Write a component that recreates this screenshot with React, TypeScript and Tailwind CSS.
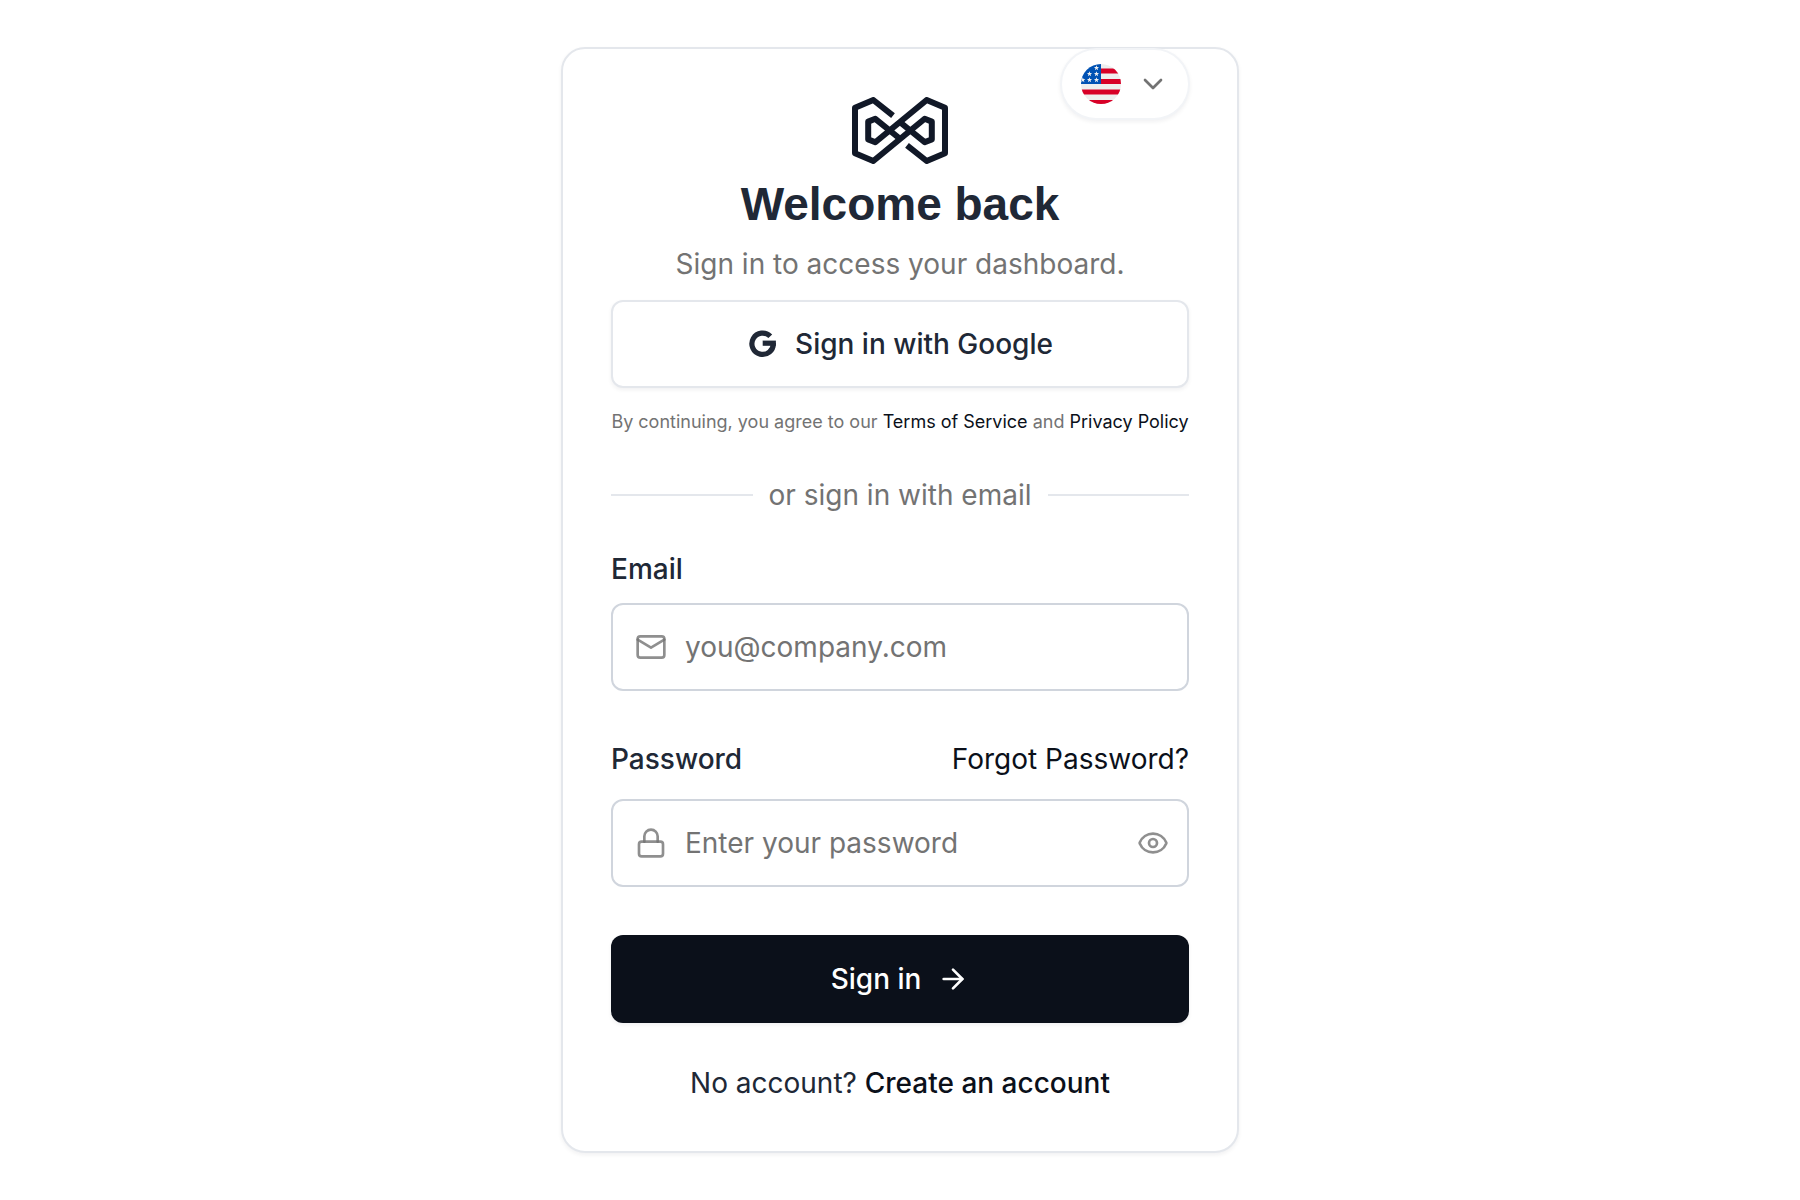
import { useState } from 'react';
import { ArrowRight, ChevronDown, Eye, Lock } from 'lucide-react';

const inputClass =
  'h-[88px] w-full rounded-xl border-2 border-[#d0d5dd] bg-white pl-[72px] text-[28px] leading-10 text-[#1f2937] outline-none placeholder:text-[#737373]';

function Logo() {
  return (
    <svg width="96" height="67" viewBox="0 0 96 67" fill="none" stroke="#111827" strokeWidth="6" strokeLinejoin="round" aria-hidden="true">
      <path d="M41 18.6 21.3 3 3 10.7V56.3L21.3 64 72.7 21.8 79.8 24.6V42.4L72.7 45.2 49 26" />
      <path d="M55 48.4 74.7 64 93 56.3V10.7L74.7 3 23.3 45.2 16.2 42.4V24.6L23.3 21.8 47 41" />
    </svg>
  );
}

function GoogleIcon() {
  return (
    <svg width="32" height="32" viewBox="0 0 32 32" fill="none" stroke="currentColor" strokeWidth="5.2" aria-hidden="true">
      <path d="M23.3 8.3A10.7 10.7 0 1 0 26.3 15.2" />
      <path d="M15.7 15.2H28.9" />
    </svg>
  );
}

// Envelope with a sharp fold
function MailIcon({ className }: { className?: string }) {
  return (
    <svg width="32" height="32" viewBox="0 0 24 24" fill="none" stroke="currentColor" strokeWidth="2" strokeLinecap="round" strokeLinejoin="round" className={className} aria-hidden="true">
      <rect x="2" y="4" width="20" height="16" rx="2" />
      <path d="m2 6.5 10 6 10-6" />
    </svg>
  );
}

const STAR = 'M0-2.8.7-.9 2.6-.9 1.1.3 1.6 2.2 0 1.1-1.6 2.2-1.1.3-2.6-.9-.7-.9Z';
const STARS = [
  [15.5, 4], [8.5, 10], [15.5, 10], [1.8, 16], [8.5, 16], [15.5, 16],
];

function UsFlag() {
  return (
    <svg width="40" height="40" viewBox="0 0 40 40" aria-hidden="true">
      <clipPath id="flag-circle">
        <circle cx="20" cy="20" r="20" />
      </clipPath>
      <g clipPath="url(#flag-circle)">
        <path fill="#eee" d="M0 0h40v40H0z" />
        <path fill="#d80027" d="M20 4.4h20v5H20zM20 15h20v5H20zM0 25.4h40v5H0zM0 36h40v4H0z" />
        <path fill="#0052b4" d="M0 0h20v20H0z" />
        {STARS.map(([x, y]) => (
          <path key={`${x}-${y}`} d={STAR} fill="#eee" transform={`translate(${x} ${y})`} />
        ))}
      </g>
    </svg>
  );
}

export default function App() {
  const [showPassword, setShowPassword] = useState(false);

  return (
    <main className="flex min-h-screen items-center justify-center bg-white font-[Inter,sans-serif] text-[28px] leading-10 text-[#202836] [font-optical-sizing:none]">
      <div className="relative w-full max-w-[678px] rounded-3xl border-2 border-[#e4e7ec] bg-white p-12 shadow-[0_2px_4px_rgba(16,24,40,0.06)]">
        {/* Language picker */}
        <button
          type="button"
          aria-label="Change language"
          aria-haspopup="listbox"
          className="absolute -top-px right-[47px] flex items-center gap-4 rounded-full border-2 border-[#f2f4f7] bg-white px-[19px] py-[14px] shadow-[0_2px_4px_rgba(16,24,40,0.06)]"
        >
          <UsFlag />
          <ChevronDown size={32} className="text-[#737373]" />
        </button>

        {/* Header */}
        <div className="flex flex-col items-center gap-2 text-center">
          <Logo />
          <h1 className="font-['Liberation_Sans',sans-serif] text-[46px] leading-[64px] font-bold">Welcome back</h1>
          <p className="text-[#737373]">Sign in to access your dashboard.</p>
        </div>

        <button
          type="button"
          className="mt-4 flex h-[88px] w-full items-center justify-center gap-4 rounded-xl border-2 border-[#e4e7ec] bg-white font-medium shadow-[0_2px_4px_rgba(16,24,40,0.06)]"
        >
          <GoogleIcon />
          Sign in with Google
        </button>

        <p className="mt-5 text-center text-[18px] leading-[27px] whitespace-nowrap text-[#737373]">
          By continuing, you agree to our <a href="#terms" className="text-[#0b101a]">Terms of Service</a> and{' '}
          <a href="#privacy" className="text-[#0b101a]">Privacy Policy</a>
        </p>

        <div className="mt-10 flex items-center gap-4 text-[#737373]">
          <span className="h-0.5 flex-1 bg-[#e4e7ec]" />
          or sign in with email
          <span className="h-0.5 flex-1 bg-[#e4e7ec]" />
        </div>

        {/* Email form */}
        <form className="mt-10" onSubmit={(e) => e.preventDefault()}>
          <label htmlFor="email" className="block leading-7 font-medium">Email</label>
          <div className="relative mt-5">
            <MailIcon className="absolute inset-y-0 left-6 my-auto text-[#737373]/80" />
            <input id="email" type="email" placeholder="you@company.com" className={`${inputClass} pr-6`} />
          </div>

          <div className="mt-12 flex items-center justify-between">
            <label htmlFor="password" className="font-medium">Password</label>
            <a href="#forgot" className="text-[#0b101a]">Forgot Password?</a>
          </div>
          <div className="relative mt-5">
            <Lock size={32} className="absolute inset-y-0 left-6 my-auto text-[#737373]/80" />
            <input
              id="password"
              type={showPassword ? 'text' : 'password'}
              placeholder="Enter your password"
              className={`${inputClass} pr-[72px]`}
            />
            <button
              type="button"
              aria-label="Show password"
              onClick={() => setShowPassword(!showPassword)}
              className="absolute inset-y-0 right-5 text-[#737373]/80"
            >
              <Eye size={32} />
            </button>
          </div>

          <button
            type="submit"
            className="mt-12 flex h-[88px] w-full items-center justify-center gap-4 rounded-xl bg-[#0b101a] font-medium text-white shadow-[0_2px_4px_rgba(16,24,40,0.06)]"
          >
            Sign in
            <ArrowRight size={32} />
          </button>
        </form>

        <p className="mt-10 text-center">
          No account? <a href="#signup" className="font-medium text-[#0b101a]">Create an account</a>
        </p>
      </div>
    </main>
  );
}
